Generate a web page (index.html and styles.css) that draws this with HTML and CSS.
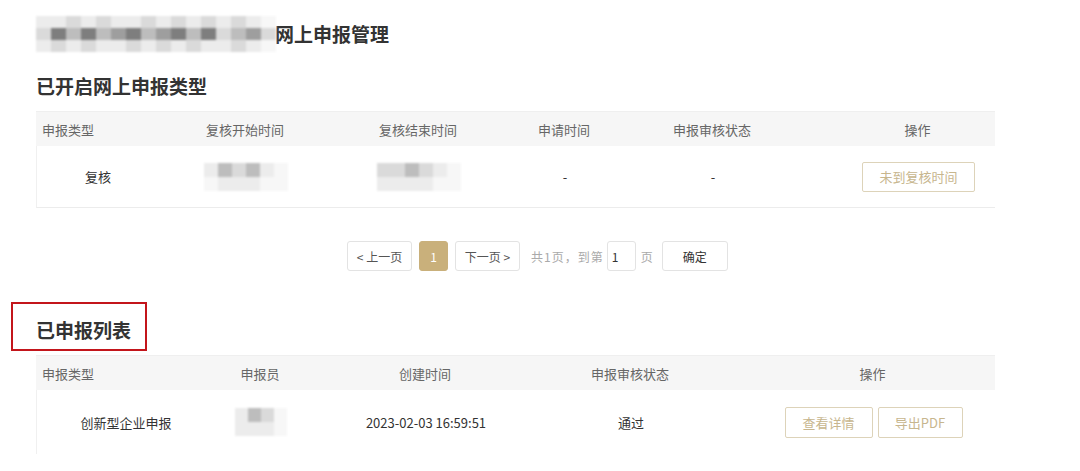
FILE: index.html
```html
<!DOCTYPE html>
<html>
  <head>
    <title>网上申报管理</title>
    <link rel="stylesheet" href="styles.css">
  </head>

  <body>
    <div class="page">
      <div class="page-title">
        <div class="mosaic title-mosaic">
          <span class="m1"></span><span class="m1"></span><span class="m2"></span><span class="m1"></span><span class="m2"></span><span class="m1"></span><span class="m1"></span><span class="m2"></span><span class="m1"></span><span class="m2"></span><span class="m1"></span><span class="m2"></span><span class="m1"></span><span class="m2"></span><span class="m1"></span><span class="m0"></span>
          <span class="m2"></span><span class="m5"></span><span class="m3"></span><span class="m5"></span><span class="m3"></span><span class="m4"></span><span class="m5"></span><span class="m3"></span><span class="m4"></span><span class="m5"></span><span class="m3"></span><span class="m5"></span><span class="m2"></span><span class="m3"></span><span class="m4"></span><span class="m2"></span>
          <span class="m1"></span><span class="m2"></span><span class="m1"></span><span class="m2"></span><span class="m1"></span><span class="m1"></span><span class="m2"></span><span class="m1"></span><span class="m2"></span><span class="m1"></span><span class="m2"></span><span class="m1"></span><span class="m1"></span><span class="m2"></span><span class="m1"></span><span class="m0"></span>
        </div>
        <h1>网上申报管理</h1>
      </div>

      <h2 class="section-title">已开启网上申报类型</h2>
      <div class="table table-open">
        <div class="row head">
          <div class="cell left">申报类型</div>
          <div class="cell">复核开始时间</div>
          <div class="cell">复核结束时间</div>
          <div class="cell">申请时间</div>
          <div class="cell">申报审核状态</div>
          <div class="cell op">操作</div>
        </div>
        <div class="row body">
          <div class="cell">复核</div>
          <div class="cell">
            <div class="mosaic cell-mosaic wide">
              <span class="m1"></span><span class="m3"></span><span class="m2"></span><span class="m3"></span><span class="m1"></span><span class="m0"></span>
              <span class="m0"></span><span class="m1"></span><span class="m1"></span><span class="m1"></span><span class="m0"></span><span class="m0"></span>
            </div>
          </div>
          <div class="cell">
            <div class="mosaic cell-mosaic wide">
              <span class="m2"></span><span class="m2"></span><span class="m3"></span><span class="m2"></span><span class="m1"></span><span class="m0"></span>
              <span class="m1"></span><span class="m1"></span><span class="m1"></span><span class="m1"></span><span class="m0"></span><span class="m0"></span>
            </div>
          </div>
          <div class="cell">-</div>
          <div class="cell">-</div>
          <div class="cell op">
            <button class="btn btn-wide">未到复核时间</button>
          </div>
        </div>
      </div>

      <div class="pager">
        <button class="page-btn">&lt; 上一页</button>
        <button class="page-btn active">1</button>
        <button class="page-btn">下一页 &gt;</button>
        <span class="pager-text">共1页，到第</span>
        <input class="page-input" type="text" value="1">
        <span class="pager-text">页</span>
        <button class="page-btn confirm">确定</button>
      </div>

      <h2 class="section-title marked">已申报列表</h2>
      <div class="table table-list">
        <div class="row head">
          <div class="cell left">申报类型</div>
          <div class="cell">申报员</div>
          <div class="cell">创建时间</div>
          <div class="cell">申报审核状态</div>
          <div class="cell op">操作</div>
        </div>
        <div class="row body">
          <div class="cell">创新型企业申报</div>
          <div class="cell">
            <div class="mosaic cell-mosaic narrow">
              <span class="m1"></span><span class="m3"></span><span class="m2"></span><span class="m0"></span>
              <span class="m1"></span><span class="m1"></span><span class="m1"></span><span class="m0"></span>
            </div>
          </div>
          <div class="cell">2023-02-03 16:59:51</div>
          <div class="cell">通过</div>
          <div class="cell op">
            <div class="actions">
              <button class="btn btn-detail">查看详情</button>
              <button class="btn btn-pdf">导出PDF</button>
            </div>
          </div>
        </div>
      </div>
    </div>
  </body>
</html>
```

FILE: styles.css
```css
body {
  margin: 0;
  background: #fff;
  font-family: "Noto Sans CJK SC", "Noto Sans", sans-serif;
  color: #333;
}

.page {
  width: 1080px;
  height: 471px;
  overflow: hidden;
  padding: 15px 0 0 36px;
  box-sizing: border-box;
}

/* title */
.page-title {
  display: flex;
  align-items: center;
  height: 37px;
}

.page-title h1 {
  margin: 0 0 0 -1px;
  font-size: 19px;
  line-height: 37px;
  font-weight: bold;
  color: #333;
}

.mosaic {
  display: grid;
  filter: blur(1.2px);
}

.mosaic span {
  display: block;
}

.title-mosaic {
  grid-template-columns: repeat(16, 15px);
  grid-template-rows: repeat(3, 12px);
  width: 240px;
}

.m0 { background: #f7f7f7; }
.m1 { background: #ececec; }
.m2 { background: #dadada; }
.m3 { background: #bdbdbd; }
.m4 { background: #9e9e9e; }
.m5 { background: #7e7e7e; }

.section-title {
  margin: 21px 0 12px;
  font-size: 19px;
  line-height: 26px;
  font-weight: bold;
  color: #333;
}

.section-title.marked {
  display: inline-block;
  margin: 31px 0 4px -25px;
  padding: 13px 14px 6px 23px;
  border: 2px solid #c3151b;
}

/* tables */
.table {
  width: 959px;
  font-size: 13px;
}

.row {
  display: grid;
  align-items: center;
}

.table-open .row {
  grid-template-columns: 122px 174px 172px 120px 176px 195px;
}

.table-list .row {
  grid-template-columns: 178px 92px 238px 172px 279px;
}

.row.head {
  height: 35px;
  background: #f6f6f6;
  color: #666;
  border-top: 1px solid #efefef;
  box-sizing: border-box;
}

.row.body {
  height: 62px;
  border-left: 1px solid #f0f0f0;
  border-bottom: 1px solid #ececec;
  box-sizing: border-box;
}

.table-list .row.body {
  height: 64px;
  border-bottom: none;
}

.cell {
  text-align: center;
  display: flex;
  justify-content: center;
  align-items: center;
}

.cell.left {
  justify-content: flex-start;
  padding-left: 6px;
}

.table-open .cell.op {
  padding-left: 40px;
}

.table-list .cell.op {
  padding-left: 34px;
}

.cell-mosaic {
  grid-template-rows: repeat(2, 14px);
}

.cell-mosaic.wide {
  grid-template-columns: repeat(6, 14px);
}

.cell-mosaic.narrow {
  grid-template-columns: repeat(4, 13px);
}

/* buttons */
.btn {
  height: 30px;
  padding: 0;
  background: #fff;
  border: 1px solid #ddd3b9;
  border-radius: 2px;
  color: #c7b68e;
  font-family: inherit;
  font-size: 13px;
}

.btn-wide {
  width: 113px;
}

.actions {
  display: flex;
  gap: 5px;
}

.btn-detail {
  width: 88px;
  height: 31px;
}

.btn-pdf {
  width: 85px;
  height: 31px;
}

/* pagination */
.pager {
  display: flex;
  align-items: center;
  height: 30px;
  margin: 33px 0 0 311px;
  font-size: 12px;
}

.page-btn {
  height: 30px;
  padding: 0;
  margin-right: 7px;
  background: #fff;
  border: 1px solid #e3e3e3;
  border-radius: 3px;
  color: #555;
  font-family: inherit;
  font-size: 12px;
  width: 65px;
}

.page-btn.active {
  width: 29px;
  background: #c9b07b;
  border-color: #c9b07b;
  color: #fff;
}

.page-btn.confirm {
  width: 66px;
  margin: 0 0 0 8px;
  color: #333;
}

.pager-text {
  color: #aaa;
  margin-left: 4px;
  letter-spacing: 1px;
}

.page-input {
  width: 29px;
  height: 30px;
  box-sizing: border-box;
  margin: 0 1px 0 3px;
  padding: 0 0 0 4px;
  border: 1px solid #e3e3e3;
  border-radius: 3px;
  font-family: inherit;
  font-size: 12px;
  color: #333;
}
```
